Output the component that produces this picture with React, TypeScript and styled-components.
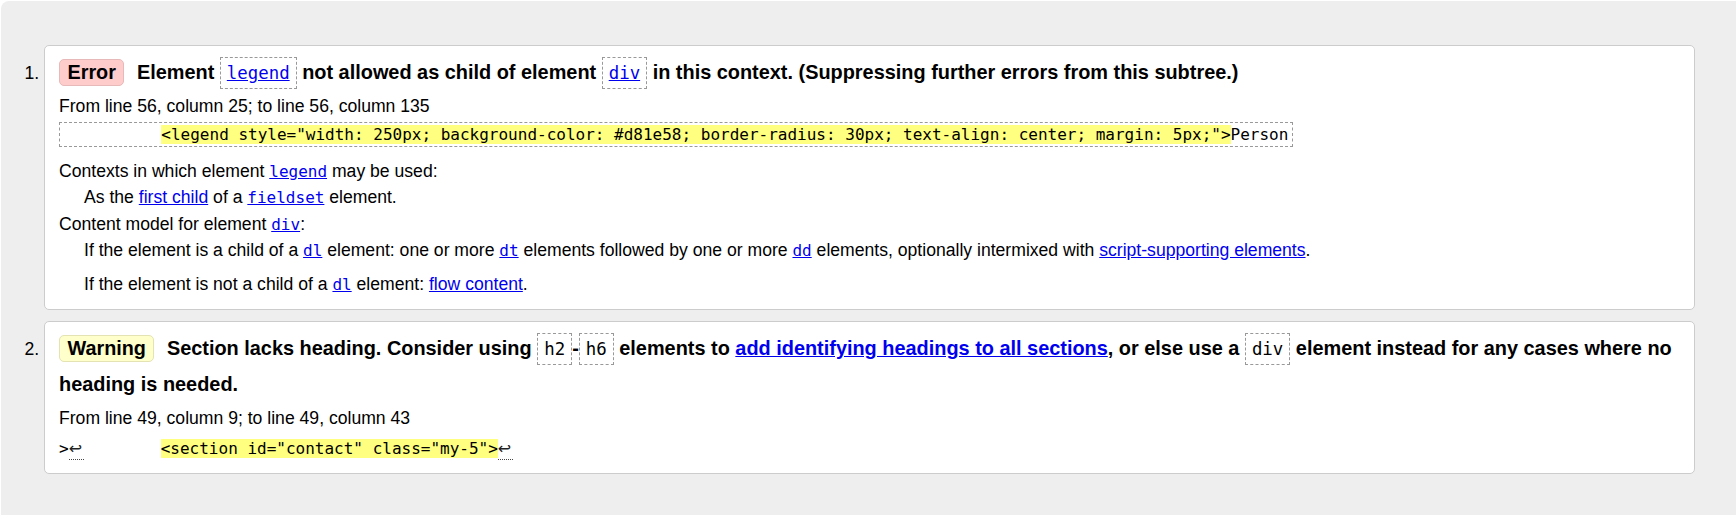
import React from "react";
import styled, { createGlobalStyle, css } from "styled-components";

const GlobalStyle = createGlobalStyle`
  html, body {
    margin: 0;
    padding: 0;
    background: #ffffff;
  }
  body {
    font-family: "Liberation Sans", Arial, sans-serif;
    color: #000000;
  }
`;

const Page = styled.div`
  box-sizing: border-box;
  margin: 1px 0 0 1px;
  min-height: 514px;
  background: #eeeeee;
  border-radius: 8px 0 0 0;
  padding: 44px 41px 30px 0;
`;

const Results = styled.ol`
  margin: 0;
  padding: 0 0 0 43px;
  list-style: decimal outside;
`;

const Result = styled.li`
  box-sizing: border-box;
  background: #ffffff;
  border: 1px solid #cccccc;
  border-radius: 5px;
  padding: 8px 8px 12px 14px;
  font-size: 17.6px;

  & + & {
    margin-top: 11px;
  }
`;

const Message = styled.p`
  margin: 0;
  font-size: 19.9px;
  font-weight: bold;
  line-height: 36px;
`;

const Badge = styled.strong<{ $kind: "error" | "warning" }>`
  display: inline-block;
  padding: 1px 7.5px;
  font-size: 19.8px;
  line-height: 23px;
  border-radius: 5px;
  margin-right: 7px;
  ${(p) =>
    p.$kind === "error"
      ? css`
          background: #ffcccc;
          border: 1px solid #e8b9b9;
        `
      : css`
          background: #ffffcc;
          border: 1px solid #e3e3b3;
        `}
`;

const MsgCode = styled.code`
  font-family: "DejaVu Sans Mono", monospace;
  font-size: 17.4px;
  font-weight: normal;
  line-height: 1;
  border: 1px dashed #999999;
  padding: 5px 6px;
`;

const Link = styled.a`
  color: #0000ee;
  text-decoration: underline;
`;

const MonoLink = styled.a`
  font-family: "DejaVu Sans Mono", monospace;
  font-size: 16px;
  line-height: 1;
  color: #0000ee;
  text-decoration: underline;
`;

const Location = styled.p`
  margin: 4px 0 0;
  line-height: 24px;
`;

const Extract = styled.p<{ $boxed?: boolean }>`
  width: fit-content;
  font-family: "DejaVu Sans Mono", monospace;
  font-size: 16px;
  white-space: pre;
  ${(p) =>
    p.$boxed
      ? css`
          margin: 4px 0 0;
          line-height: 23px;
          border: 1px dashed #999999;
          padding: 0 4px 0 5px;
        `
      : css`
          margin: 7px 0 0;
          line-height: 24px;
        `}
`;

const Mark = styled.mark`
  background: #ffff80;
  color: inherit;
`;

const LineBreak = styled.b`
  display: inline-block;
  width: 15px;
  line-height: 20px;
  font-family: "DejaVu Sans", sans-serif;
  font-weight: normal;
  font-size: 16px;
  color: #222222;
  border-bottom: 1px dotted #444444;
`;

const Note = styled.p<{ $first?: boolean }>`
  margin: ${(p) => (p.$first ? "11px 0 0" : "0")};
  line-height: 26.4px;
`;

const Detail = styled.p<{ $spaced?: boolean }>`
  margin: ${(p) => (p.$spaced ? "7px" : "0")} 0 0 25px;
  line-height: 26.4px;
`;

export default function App() {
  return (
    <>
      <GlobalStyle />
      <Page>
        <Results>
          <Result>
            <Message>
              <Badge $kind="error">Error</Badge> Element{" "}
              <MsgCode>
                <Link href="#legend">legend</Link>
              </MsgCode>{" "}
              not allowed as child of element{" "}
              <MsgCode>
                <Link href="#div">div</Link>
              </MsgCode>{" "}
              in this context. (Suppressing further errors from this subtree.)
            </Message>
            <Location>From line 56, column 25; to line 56, column 135</Location>
            <Extract $boxed>
              {"          "}
              <Mark>
                {
                  '<legend style="width: 250px; background-color: #d81e58; border-radius: 30px; text-align: center; margin: 5px;">'
                }
              </Mark>
              Person
            </Extract>
            <Note $first>
              Contexts in which element <MonoLink href="#legend">legend</MonoLink> may be used:
            </Note>
            <Detail>
              As the <Link href="#first-child">first child</Link> of a{" "}
              <MonoLink href="#fieldset">fieldset</MonoLink> element.
            </Detail>
            <Note>
              Content model for element <MonoLink href="#div">div</MonoLink>:
            </Note>
            <Detail>
              If the element is a child of a <MonoLink href="#dl">dl</MonoLink> element: one or
              more <MonoLink href="#dt">dt</MonoLink> elements followed by one or more{" "}
              <MonoLink href="#dd">dd</MonoLink> elements, optionally intermixed with{" "}
              <Link href="#script-supporting">script-supporting elements</Link>.
            </Detail>
            <Detail $spaced>
              If the element is not a child of a <MonoLink href="#dl">dl</MonoLink> element:{" "}
              <Link href="#flow">flow content</Link>.
            </Detail>
          </Result>
          <Result>
            <Message>
              <Badge $kind="warning">Warning</Badge> Section lacks heading. Consider using{" "}
              <MsgCode>h2</MsgCode>-<MsgCode>h6</MsgCode> elements to{" "}
              <Link href="#headings">add identifying headings to all sections</Link>, or else use
              a <MsgCode>div</MsgCode> element instead for any cases where no heading is needed.
            </Message>
            <Location>From line 49, column 9; to line 49, column 43</Location>
            <Extract>
              {">"}
              <LineBreak title="Line break">↩</LineBreak>
              {"        "}
              <Mark>{'<section id="contact" class="my-5">'}</Mark>
              <LineBreak title="Line break">↩</LineBreak>
            </Extract>
          </Result>
        </Results>
      </Page>
    </>
  );
}
